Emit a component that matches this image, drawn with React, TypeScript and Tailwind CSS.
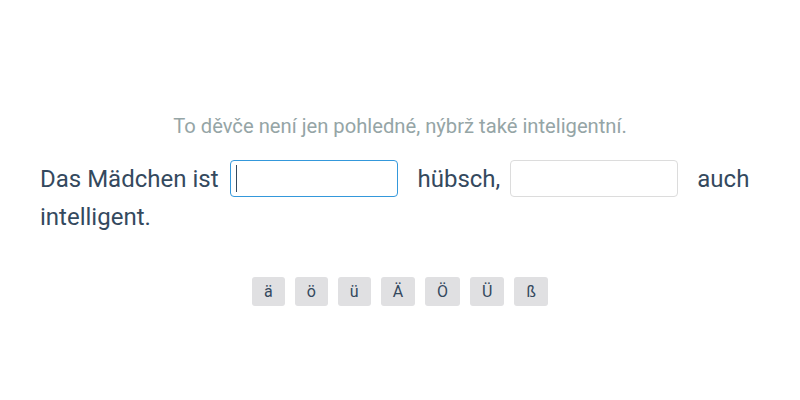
import React from "react";

export default function App() {
  const chars = ["ä", "ö", "ü", "Ä", "Ö", "Ü", "ß"];
  return (
    <div
      className="w-[800px] h-[400px] bg-white px-10 pt-[111px]"
      style={{ fontFamily: "Roboto, 'Noto Sans', sans-serif" }}
    >
      <p className="text-center text-[20.2px] leading-[30px] text-[#95a5a6]">
        To děvče není jen pohledné, nýbrž také inteligentní.
      </p>
      <div className="mt-[19px] text-[24px] leading-[38px] text-[#34495e]">
        Das Mädchen ist
        <span className="relative inline-block align-middle -mt-[4px] ml-3 mr-[19px]">
          <input
            type="text"
            className="block w-[168px] h-[37px] rounded-[4px] border border-[#3498db] bg-white outline-none"
          />
          <span className="absolute left-[6px] top-[5px] h-[27px] w-px bg-[#34495e]" />
        </span>
        hübsch,
        <input
          type="text"
          className="inline-block align-middle -mt-[4px] ml-[10px] mr-[19px] w-[168px] h-[37px] rounded-[4px] border border-[#dcdcdc] bg-white outline-none"
        />
        auch intelligent.
      </div>
      <div className="mt-[41px] flex justify-center gap-[10px]">
        {chars.map((c) => (
          <button
            key={c}
            className="h-[29px] px-3 rounded-[3px] bg-[#e0e0e2] text-[16px] text-[#34495e] leading-none"
          >
            {c}
          </button>
        ))}
      </div>
    </div>
  );
}
